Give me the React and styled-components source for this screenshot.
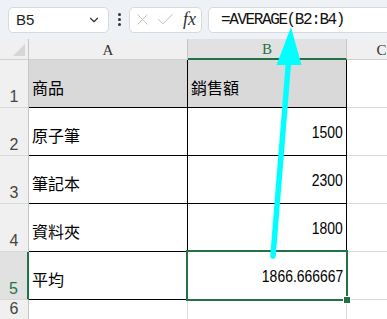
import styled, { createGlobalStyle } from "styled-components";
import { ChevronDown, X, Check } from "lucide-react";

const GlobalStyle = createGlobalStyle`
  html, body {
    margin: 0;
    background: #ffffff;
    overflow: hidden;
  }
  * {
    box-sizing: border-box;
  }
`;

const GREEN = "#217346";

const Page = styled.div`
  position: relative;
  width: 387px;
  height: 319px;
  overflow: hidden;
  font-family: "Liberation Sans", "Noto Sans CJK TC", sans-serif;
`;

const Toolbar = styled.div`
  height: 39px;
  display: flex;
  align-items: center;
  padding-left: 8px;
  background: #eef1f5;
`;

const NameBox = styled.div`
  width: 101px;
  height: 26px;
  display: flex;
  align-items: center;
  justify-content: space-between;
  padding: 0 7px 0 7px;
  background: #ffffff;
  border: 1px solid #d6d9dd;
  border-radius: 5px;
  font-size: 15px;
  color: #222;
`;

const Dots = styled.div`
  display: flex;
  flex-direction: column;
  gap: 2px;
  margin: 0 8px 0 9px;

  span {
    width: 3px;
    height: 3px;
    border-radius: 50%;
    background: #333;
  }
`;

const ActionBox = styled.div`
  width: 73px;
  height: 26px;
  display: flex;
  align-items: center;
  gap: 3px;
  padding-left: 3px;
  background: #ffffff;
  border: 1px solid #d6d9dd;
  border-radius: 5px;
`;

const Fx = styled.span`
  font-family: "Liberation Serif", serif;
  font-style: italic;
  font-size: 18px;
  color: #333;
  margin-left: 4px;
`;

const FormulaBox = styled.div`
  flex: 1;
  height: 26px;
  margin-left: 6px;
  margin-right: -10px;
  display: flex;
  align-items: center;
  padding-left: 12px;
  background: #ffffff;
  border: 1px solid #d6d9dd;
  border-radius: 5px;
  font-family: "Liberation Mono", monospace;
  font-size: 16px;
  letter-spacing: -1.4px;
  color: #111;
`;

const Sheet = styled.div`
  display: grid;
  grid-template-columns: 29px 159px 159px 70px;
  grid-template-rows: 21px repeat(5, 48px) 1fr;
  height: 280px;
`;

const Corner = styled.div`
  position: relative;
  background: #f0f0f0;
  border-right: 1px solid #c6c6c6;
  border-bottom: 1px solid #d0d0d0;

  &::after {
    content: "";
    position: absolute;
    right: 3px;
    bottom: 3px;
    border-style: solid;
    border-width: 0 0 12px 12px;
    border-color: transparent transparent #d6d6d6 transparent;
  }
`;

const ColHead = styled.div`
  display: flex;
  align-items: center;
  justify-content: center;
  padding-top: 2px;
  font-family: "Liberation Serif", serif;
  font-size: 15px;
  background: ${(p) => (p.$active ? "#e1e1e1" : "#f0f0f0")};
  color: ${(p) => (p.$active ? GREEN : "#333")};
  border-right: 1px solid #c6c6c6;
  border-bottom: ${(p) => (p.$active ? `2px solid ${GREEN}` : "1px solid #d0d0d0")};
`;

const RowHead = styled.div`
  display: flex;
  align-items: flex-end;
  justify-content: center;
  padding-bottom: 1px;
  font-size: 16px;
  background: ${(p) => (p.$active ? "#e1e1e1" : "#f0f0f0")};
  color: ${(p) => (p.$active ? GREEN : "#444")};
  border-right: ${(p) => (p.$active ? `2px solid ${GREEN}` : "1px solid #c6c6c6")};
  border-bottom: 1px solid #d8d8d8;
`;

const Cell = styled.div`
  position: relative;
  display: flex;
  align-items: center;
  justify-content: ${(p) => (p.$num ? "flex-end" : "flex-start")};
  padding: ${(p) => (p.$num ? "3px 3px 0 0" : "6px 0 0 3px")};
  background: ${(p) => (p.$head ? "#d9d9d9" : "#ffffff")};
  border-right: 1px solid #000;
  border-bottom: 1px solid #000;
  font-family: "Noto Sans CJK TC", "Liberation Sans", sans-serif;
  font-size: 16px;
  color: #000;
`;

const Num = styled.span`
  display: inline-block;
  font-family: "Liberation Sans", sans-serif;
  font-size: 17px;
  transform: scaleX(0.82);
  transform-origin: right center;
`;

const Blank = styled.div`
  background: #ffffff;
  border-right: ${(p) => (p.$right ? "1px solid #d9d9d9" : "none")};
  border-bottom: ${(p) => (p.$bottom ? "1px solid #d9d9d9" : "none")};
`;

const Selection = styled.div`
  position: absolute;
  top: -2px;
  left: -2px;
  right: -2px;
  bottom: -2px;
  border: 2px solid ${GREEN};
  pointer-events: none;

  &::after {
    content: "";
    position: absolute;
    right: -4px;
    bottom: -4px;
    width: 6px;
    height: 6px;
    background: ${GREEN};
    outline: 1px solid #ffffff;
  }
`;

const ArrowLayer = styled.svg`
  position: absolute;
  top: 0;
  left: 0;
  pointer-events: none;
`;

const rows = [
  { n: 1, label: "商品", value: "銷售額", head: true },
  { n: 2, label: "原子筆", value: "1500" },
  { n: 3, label: "筆記本", value: "2300" },
  { n: 4, label: "資料夾", value: "1800" },
  { n: 5, label: "平均", value: "1866.666667", active: true },
];

export default function App() {
  return (
    <Page>
      <GlobalStyle />
      <Toolbar>
        <NameBox>
          <span>B5</span>
          <ChevronDown size={14} strokeWidth={2} color="#333" />
        </NameBox>
        <Dots>
          <span />
          <span />
          <span />
        </Dots>
        <ActionBox>
          <X size={19} strokeWidth={1.1} color="#bdbdbd" />
          <Check size={21} strokeWidth={1.1} color="#bdbdbd" />
          <Fx>fx</Fx>
        </ActionBox>
        <FormulaBox>=AVERAGE(B2:B4)</FormulaBox>
      </Toolbar>

      <Sheet>
        <Corner />
        <ColHead>A</ColHead>
        <ColHead $active>B</ColHead>
        <ColHead>C</ColHead>

        {rows.map((r) => (
          <>
            <RowHead key={`h${r.n}`} $active={r.active}>
              {r.n}
            </RowHead>
            <Cell key={`a${r.n}`} $head={r.head}>
              {r.label}
            </Cell>
            <Cell key={`b${r.n}`} $head={r.head} $num={!r.head}>
              {r.head ? r.value : <Num>{r.value}</Num>}
              {r.active && <Selection />}
            </Cell>
            <Blank key={`c${r.n}`} $bottom />
          </>
        ))}

        <RowHead>6</RowHead>
        <Blank $right />
        <Blank $right />
        <Blank />
      </Sheet>

      <ArrowLayer width="387" height="319" viewBox="0 0 387 319">
        <line
          x1="288.5"
          y1="62"
          x2="273"
          y2="256"
          stroke="#00ffff"
          strokeWidth="5.5"
          strokeLinecap="round"
        />
        <polygon points="291,27 276.5,65 301.5,65" fill="#00ffff" />
      </ArrowLayer>
    </Page>
  );
}
